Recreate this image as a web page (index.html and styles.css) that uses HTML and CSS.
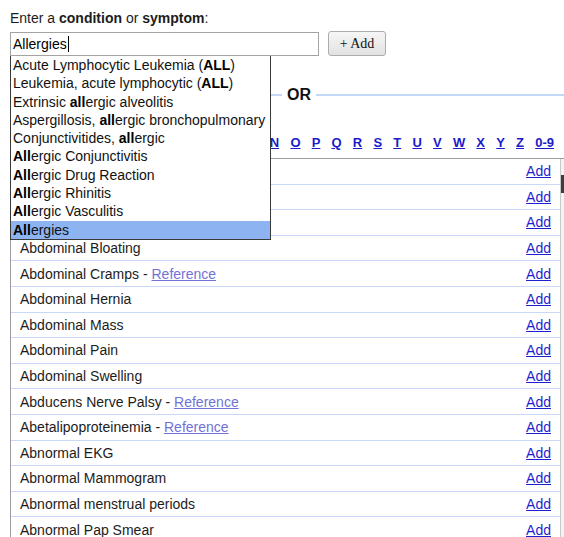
FILE: index.html
```html
<!DOCTYPE html>
<html lang="en">
<head>
<meta charset="utf-8">
<title>Conditions and symptoms</title>
<link rel="stylesheet" href="styles.css">
</head>
<body>
<div class="page">
  <div class="prompt">Enter a <b>condition</b> or <b>symptom</b>:</div>

  <div class="search">
    <div class="field">
      <div class="input">Allergies<span class="caret"></span></div>
      <ul class="suggest">
        <li>Acute Lymphocytic Leukemia (<b>ALL</b>)</li>
        <li>Leukemia, acute lymphocytic (<b>ALL</b>)</li>
        <li>Extrinsic <b>all</b>ergic alveolitis</li>
        <li>Aspergillosis, <b>all</b>ergic bronchopulmonary</li>
        <li>Conjunctivitides, <b>all</b>ergic</li>
        <li><b>All</b>ergic Conjunctivitis</li>
        <li><b>All</b>ergic Drug Reaction</li>
        <li><b>All</b>ergic Rhinitis</li>
        <li><b>All</b>ergic Vasculitis</li>
        <li class="active"><b>All</b>ergies</li>
      </ul>
    </div>
    <button class="add-btn" type="button">+ Add</button>
  </div>

  <div class="or">
    <span class="rule rule-left"></span>
    <span class="or-text">OR</span>
    <span class="rule rule-right"></span>
  </div>

  <nav class="letters">
    <a href="#">A</a><a href="#">B</a><a href="#">C</a><a href="#">D</a><a href="#">E</a><a href="#">F</a><a href="#">G</a><a href="#">H</a><a href="#">I</a><a href="#">J</a><a href="#">K</a><a href="#">L</a><a href="#">M</a><a href="#">N</a><a href="#">O</a><a href="#">P</a><a href="#">Q</a><a href="#">R</a><a href="#">S</a><a href="#">T</a><a href="#">U</a><a href="#">V</a><a href="#">W</a><a href="#">X</a><a href="#">Y</a><a href="#">Z</a><a href="#">0-9</a>
  </nav>

  <div class="list">
    <div class="rows">
      <div class="row"><span class="name">Abdominal Abscess</span><a class="add" href="#">Add</a></div>
      <div class="row"><span class="name">Abdominal Adhesions</span><a class="add" href="#">Add</a></div>
      <div class="row"><span class="name">Abdominal Aortic Aneurysm</span><a class="add" href="#">Add</a></div>
      <div class="row"><span class="name">Abdominal Bloating</span><a class="add" href="#">Add</a></div>
      <div class="row"><span class="name">Abdominal Cramps - <a class="ref" href="#">Reference</a></span><a class="add" href="#">Add</a></div>
      <div class="row"><span class="name">Abdominal Hernia</span><a class="add" href="#">Add</a></div>
      <div class="row"><span class="name">Abdominal Mass</span><a class="add" href="#">Add</a></div>
      <div class="row"><span class="name">Abdominal Pain</span><a class="add" href="#">Add</a></div>
      <div class="row"><span class="name">Abdominal Swelling</span><a class="add" href="#">Add</a></div>
      <div class="row"><span class="name">Abducens Nerve Palsy - <a class="ref" href="#">Reference</a></span><a class="add" href="#">Add</a></div>
      <div class="row"><span class="name">Abetalipoproteinemia - <a class="ref" href="#">Reference</a></span><a class="add" href="#">Add</a></div>
      <div class="row"><span class="name">Abnormal EKG</span><a class="add" href="#">Add</a></div>
      <div class="row"><span class="name">Abnormal Mammogram</span><a class="add" href="#">Add</a></div>
      <div class="row"><span class="name">Abnormal menstrual periods</span><a class="add" href="#">Add</a></div>
      <div class="row"><span class="name">Abnormal Pap Smear</span><a class="add" href="#">Add</a></div>
      <div class="row"><span class="name">Abnormal Stools</span><a class="add" href="#">Add</a></div>
    </div>
    <div class="scrollbar"><div class="scroll-up"></div><div class="thumb"></div></div>
  </div>
</div>
</body>
</html>
```

FILE: styles.css
```css
html, body {
  margin: 0;
  padding: 0;
  background: #fff;
  overflow: hidden;
}

body {
  font-family: "Liberation Sans", Arial, sans-serif;
  font-size: 14px;
  color: #1c1c1c;
}

.page {
  padding: 10px 0 0 10px;
}

.prompt {
  line-height: 16px;
  margin-bottom: 6px;
}

/* search field + autocomplete */
.search {
  display: flex;
  align-items: flex-start;
  gap: 9px;
}

.field {
  position: relative;
}

.input {
  box-sizing: border-box;
  width: 309px;
  height: 24px;
  border: 1px solid #a3a3a3;
  padding: 0 0 0 2px;
  line-height: 22px;
  color: #000;
  display: flex;
  align-items: center;
}

.caret {
  display: inline-block;
  width: 1px;
  height: 16px;
  background: #000;
  margin-left: 1px;
}

.suggest {
  position: absolute;
  top: 100%;
  left: 0;
  width: 259px;
  margin: 0;
  padding: 0;
  list-style: none;
  background: #fff;
  border: 1px solid #3a3a3a;
  border-top: none;
  z-index: 2;
}

.suggest li {
  line-height: 18.3px;
  padding-left: 2px;
  white-space: nowrap;
  color: #111;
}

.suggest li b {
  color: #000;
}

.suggest li.active {
  background: #8db3f1;
}

.add-btn {
  box-sizing: border-box;
  margin-top: -1px;
  width: 58px;
  height: 25px;
  border: 1px solid #acacac;
  border-radius: 3px;
  background: linear-gradient(#f6f6f6, #e2e2e2);
  font-family: "Liberation Serif", "Times New Roman", serif;
  font-size: 14px;
  color: #111;
  padding: 0;
}

/* OR divider */
.or {
  display: flex;
  align-items: center;
  margin-top: 29px;
  height: 20px;
}

.rule {
  height: 2px;
  background: #c3d7f7;
}

.rule-left {
  width: 272px;
}

.rule-right {
  flex: 1;
}

.or-text {
  font-size: 16px;
  font-weight: bold;
  color: #111;
  padding: 0 5px 0 5px;
}

/* A-Z index */
.letters {
  display: flex;
  justify-content: flex-end;
  gap: 11.2px;
  padding-right: 10px;
  margin-top: 30px;
  line-height: 16px;
}

.letters a {
  font-size: 13px;
  font-weight: bold;
  color: #1b1bc9;
  text-decoration: underline;
}

/* condition list */
.list {
  display: flex;
  margin-top: 7px;
  margin-right: -14px;
  border-top: 1px solid #9c9c9c;
  border-left: 1px solid #9c9c9c;
}

.rows {
  flex: 1;
}

.row {
  box-sizing: border-box;
  height: 25.6px;
  display: flex;
  align-items: center;
  justify-content: space-between;
  padding: 0 9px 0 9px;
  border-bottom: 1px solid #c7d9f6;
}

.name {
  color: #1c1c1c;
}

.ref {
  color: #7272d6;
  text-decoration: underline;
}

.add {
  color: #1f1fcf;
  text-decoration: underline;
}

.scrollbar {
  width: 17px;
  border-left: 1px solid #c8c8c8;
  background: #f3f3f3;
}

.scroll-up {
  height: 16px;
}

.thumb {
  height: 18px;
  border-left: 3px solid #3d3d3d;
  background: #d8d8d8;
}
```
